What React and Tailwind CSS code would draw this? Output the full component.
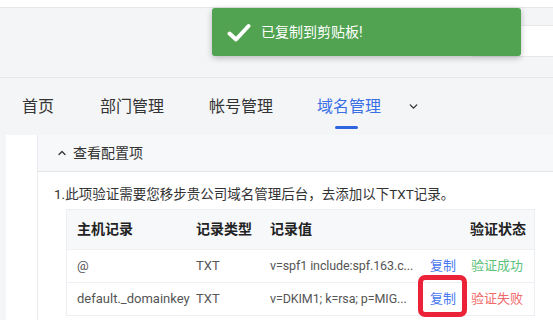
import { ChevronDown, ChevronUp } from 'lucide-react'

const rows = [
  { host: '@', type: 'TXT', value: 'v=spf1 include:spf.163.c...', ok: true },
  { host: 'default._domainkey', type: 'TXT', value: 'v=DKIM1; k=rsa; p=MIG...', ok: false },
]

export default function App() {
  return (
    <div className="relative w-[553px] h-[320px] overflow-hidden bg-[#f4f5f7] text-[#333] font-['Roboto','Noto_Sans_CJK_SC',sans-serif]">
      <div className="h-[8px] bg-white border-b border-[#e4e6e9]" />
      <div className="h-[70px] border-b border-[#e4e6e9] flex justify-end pt-[17px]">
        <div className="w-[80px] h-[32px] bg-white border-y border-[#e6e8eb]" />
      </div>

      {/* nav */}
      <div className="h-[57px] flex items-center pl-[22px] text-[16px] text-[#333]">
        <span>首页</span>
        <span className="ml-[46px]">部门管理</span>
        <span className="ml-[45px]">帐号管理</span>
        <span className="ml-[44px] relative text-[#3a6fe6]">
          域名管理
          <span className="absolute left-[18px] top-[31px] w-[23px] h-[3px] bg-[#2f64e0] rounded-sm" />
        </span>
        <ChevronDown size={13} strokeWidth={2.5} className="ml-[26px] text-[#333]" />
      </div>

      {/* card */}
      <div className="ml-[6px] bg-white flex h-[200px]">
        <div className="w-[32px] border-r border-[#e8eaed]" />
        <div className="flex-1">
          <div className="h-[37px] bg-[#f7f8fa] border-b border-[#e3e5e8] flex items-center pl-[18px] text-[14px] text-[#333]">
            <ChevronUp size={12} strokeWidth={2.5} />
            <span className="ml-[5px]">查看配置项</span>
          </div>
          <div className="pl-[16px] pt-[12px] text-[13.5px] text-[#333] leading-[20px] whitespace-nowrap">
            1.此项验证需要您移步贵公司域名管理后台，去添加以下TXT记录。
          </div>
          <div className="ml-[28px] mt-[5px] w-[469px] border border-[#ebeef2] text-[13px]">
            <div className="h-[39px] bg-[#f7f8fa] flex items-center font-bold text-[14px] text-[#222]">
              <div className="w-[120px] pl-[10px]">主机记录</div>
              <div className="w-[73px] pl-[9px]">记录类型</div>
              <div className="w-[200px] pl-[10px]">记录值</div>
              <div className="pl-[10px]">验证状态</div>
            </div>
            {rows.map((r) => (
              <div key={r.host} className="h-[33px] flex items-center border-t border-[#eef0f3] text-[#555]">
                <div className="w-[120px] pl-[10px] whitespace-nowrap">{r.host}</div>
                <div className="w-[73px] pl-[9px]">{r.type}</div>
                <div className="w-[160px] pl-[10px] whitespace-nowrap text-[12.5px] tracking-[-0.1px]">{r.value}</div>
                <div className="w-[40px] pl-[10px] text-[#4a78f0]">复制</div>
                <div className={`pl-[11px] ${r.ok ? 'text-[#5cc27a]' : 'text-[#f06a6a]'}`}>
                  {r.ok ? '验证成功' : '验证失败'}
                </div>
              </div>
            ))}
          </div>
        </div>
      </div>

      {/* highlight box */}
      <div className="absolute left-[418px] top-[275px] w-[49px] h-[42px] rounded-[7px] border-[5px] border-[#ec2238]" />

      {/* toast */}
      <div className="absolute left-[212px] top-[8px] w-[309px] h-[48px] rounded-[3px] bg-[#51a351] shadow-[0_2px_6px_rgba(0,0,0,0.25)] flex items-center pl-[15px] text-white text-[14px]">
        <svg width="24" height="19" viewBox="0 0 24 19">
          <path d="M2.5 10.5 L9 16.5 L21.5 3" fill="none" stroke="white" strokeWidth="4" strokeLinecap="round" strokeLinejoin="round" />
        </svg>
        <span className="ml-[10px]">已复制到剪贴板!</span>
      </div>
    </div>
  )
}
